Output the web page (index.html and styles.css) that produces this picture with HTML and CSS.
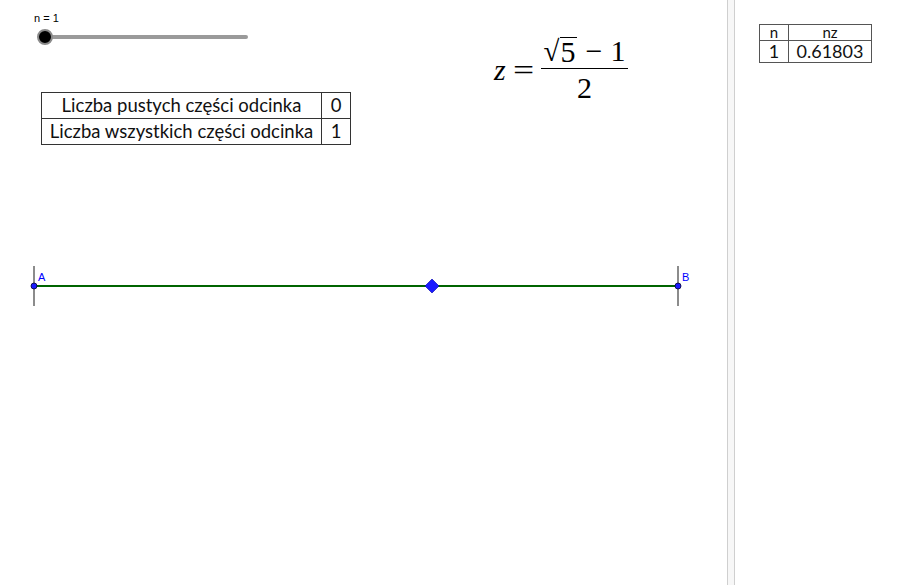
FILE: index.html
```html
<!DOCTYPE html>
<html>
<head>
<meta charset="utf-8">
<link rel="stylesheet" href="styles.css">
</head>
<body>
<div class="app">
  <div class="graphics">
    <div class="slider">
      <div class="slider-label">n = 1</div>
      <div class="slider-track"><div class="slider-knob"></div></div>
    </div>

    <div class="formula">
      <span class="var">z</span>
      <span class="eq">=</span>
      <span class="frac">
        <span class="num"><span class="rad">√</span><span class="radicand">5</span><span class="op">−</span><span>1</span></span>
        <span class="den">2</span>
      </span>
    </div>

    <table class="info">
      <tr><td class="lbl">Liczba pustych części odcinka</td><td class="val">0</td></tr>
      <tr><td class="lbl">Liczba wszystkich części odcinka</td><td class="val">1</td></tr>
    </table>

    <svg class="geo" width="727" height="585" viewBox="0 0 727 585">
      <line x1="34" y1="266" x2="34" y2="306" stroke="#666" stroke-width="1.5"/>
      <line x1="678" y1="266" x2="678" y2="306" stroke="#666" stroke-width="1.5"/>
      <line x1="34" y1="286" x2="678" y2="286" stroke="#006400" stroke-width="2"/>
      <circle cx="34" cy="286" r="3" fill="#1a1aff" stroke="#000033" stroke-width="0.8"/>
      <circle cx="678" cy="286" r="3" fill="#1a1aff" stroke="#000033" stroke-width="0.8"/>
      <polygon points="432,279 439,286 432,293 425,286" fill="#1a1aff" stroke="#0000aa" stroke-width="0.6"/>
      <text x="38" y="281" class="ptlabel">A</text>
      <text x="682" y="281" class="ptlabel">B</text>
    </svg>
  </div>
  <div class="divider"></div>
  <div class="side">
    <table class="spread">
      <tr class="head"><td class="c1">n</td><td class="c2">nz</td></tr>
      <tr class="row"><td class="c1">1</td><td class="c2">0.61803</td></tr>
    </table>
  </div>
</div>
</body>
</html>
```

FILE: styles.css
```css
html, body {
  margin: 0;
  padding: 0;
  background: #ffffff;
  overflow: hidden;
}
.app {
  display: flex;
  width: 924px;
  height: 585px;
}
.graphics {
  position: relative;
  width: 727px;
  height: 585px;
  flex: none;
}
.divider {
  flex: none;
  width: 6px;
  height: 585px;
  background: #f7f7f7;
  border-left: 1px solid #cfcfcf;
  border-right: 1px solid #cfcfcf;
}
.side {
  flex: 1;
  padding: 24px 0 0 24px;
}

/* slider */
.slider {
  position: absolute;
  left: 34px;
  top: 12px;
}
.slider-label {
  font-family: "Liberation Sans", Arial, sans-serif;
  font-size: 11px;
  color: #000;
  line-height: 12px;
}
.slider-track {
  position: relative;
  margin-top: 11px;
  margin-left: 11px;
  width: 203px;
  height: 4px;
  border-radius: 2px;
  background: #9a9a9a;
}
.slider-knob {
  position: absolute;
  left: -8px;
  top: -6px;
  width: 12px;
  height: 12px;
  border-radius: 50%;
  background: #000;
  border: 2px solid #8a8a8a;
}

/* formula */
.formula {
  position: absolute;
  left: 494px;
  top: 36px;
  display: flex;
  align-items: center;
  font-family: "Liberation Serif", "DejaVu Serif", serif;
  font-size: 30px;
  color: #000;
}
.var {
  font-style: italic;
  margin-right: 9px;
}
.eq {
  margin-right: 9px;
  transform: scaleX(1.25);
}
.frac {
  display: inline-flex;
  flex-direction: column;
  align-items: center;
}
.num {
  display: flex;
  align-items: flex-end;
  padding: 0 3px 2px 3px;
  line-height: 30px;
}
.rad {
  font-size: 29px;
  line-height: 30px;
}
.radicand {
  border-top: 1.5px solid #000;
  padding: 0 1px;
  line-height: 28px;
}
.op {
  margin: 0 8px 0 9px;
}
.den {
  border-top: 1.5px solid #000;
  width: 100%;
  text-align: center;
  line-height: 30px;
  padding-top: 4px;
}

/* left info table */
.info {
  position: absolute;
  left: 41px;
  top: 92px;
  border-collapse: collapse;
  font-family: Lato, "Open Sans", sans-serif;
  font-size: 18.5px;
  color: #111;
}
.info td {
  border: 1px solid #333;
  height: 25px;
  padding: 0;
  text-align: center;
  line-height: 25px;
}
.info .lbl {
  width: 279px;
}
.info .val {
  width: 28px;
}

/* spreadsheet table */
.spread {
  border-collapse: collapse;
  font-family: Lato, "Open Sans", sans-serif;
  color: #111;
}
.spread td {
  border: 1px solid #555;
  padding: 0;
  text-align: center;
}
.spread .c1 {
  width: 28px;
}
.spread .c2 {
  width: 82px;
}
.spread .head td {
  height: 15px;
  font-size: 15px;
  line-height: 15px;
}
.spread .row td {
  height: 21px;
  font-size: 18px;
  line-height: 21px;
}

/* geometry */
.geo {
  position: absolute;
  left: 0;
  top: 0;
}
.ptlabel {
  font-family: "Liberation Sans", Arial, sans-serif;
  font-size: 11px;
  fill: #0000ff;
}
```
